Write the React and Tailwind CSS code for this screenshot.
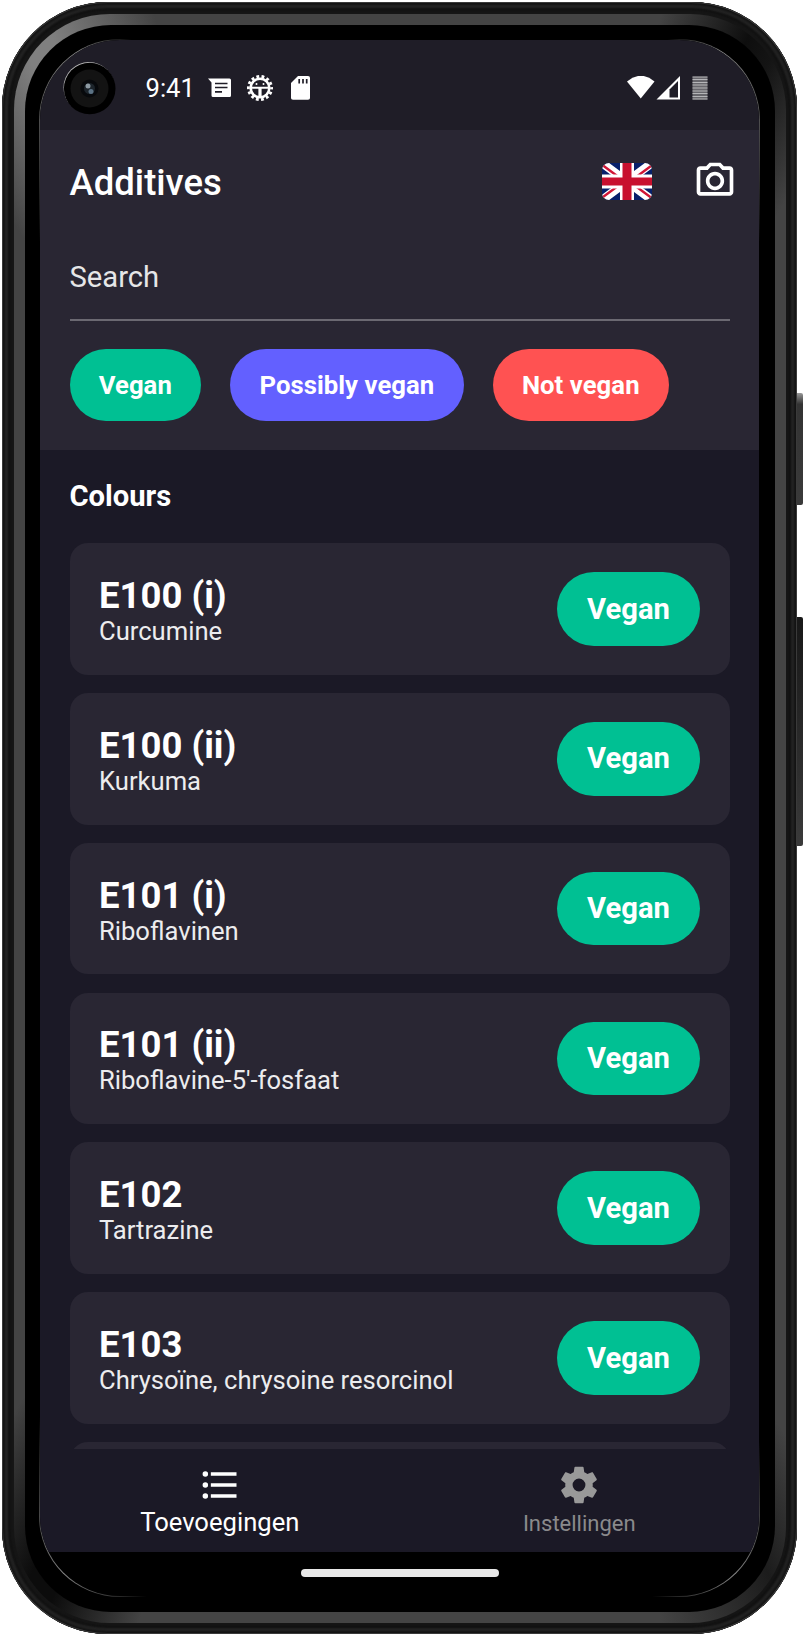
import React, { useState } from "react";

const additives = [
  { code: "E100 (i)", name: "Curcumine", status: "Vegan" },
  { code: "E100 (ii)", name: "Kurkuma", status: "Vegan" },
  { code: "E101 (i)", name: "Riboflavinen", status: "Vegan" },
  { code: "E101 (ii)", name: "Riboflavine-5'-fosfaat", status: "Vegan" },
  { code: "E102", name: "Tartrazine", status: "Vegan" },
  { code: "E103", name: "Chrysoïne, chrysoine resorcinol", status: "Vegan" },
];

const filters = [
  { label: "Vegan", color: "bg-[#00c093]" },
  { label: "Possibly vegan", color: "bg-[#6360ff]" },
  { label: "Not vegan", color: "bg-[#ff5252]" },
];

function FlagIcon() {
  return (
    <svg viewBox="0 0 50 37" className="w-[50px] h-[37px] rounded-[7px]">
      <rect width="50" height="37" fill="#07206b" />
      <path d="M0 0L50 37M50 0L0 37" stroke="#fff" strokeWidth="8.5" />
      <path d="M-1 1L22 18M51 36L28 19M51 1.5L28 18.5M-1 35.5L22 18.5" stroke="#d01636" strokeWidth="2.4" />
      <path d="M25 0V37M0 18.500H50" stroke="#fff" strokeWidth="14" />
      <path d="M25 0V37" stroke="#c8102e" strokeWidth="9" />
      <path d="M0 18.500H50" stroke="#c8102e" strokeWidth="8" />
    </svg>
  );
}

function CameraIcon() {
  return (
    <svg viewBox="0 0 24 24" fill="currentColor" className="size-[44px]">
      <path d="M20 4h-3.17L15 2H9L7.17 4H4c-1.1 0-2 .9-2 2v12c0 1.1.9 2 2 2h16c1.1 0 2-.9 2-2V6c0-1.1-.9-2-2-2zm0 14H4V6h4.05l1.83-2h4.24l1.83 2H20v12zM12 7c-2.76 0-5 2.24-5 5s2.24 5 5 5 5-2.24 5-5-2.24-5-5-5zm0 8c-1.65 0-3-1.35-3-3s1.35-3 3-3 3 1.35 3 3-1.35 3-3 3z" />
    </svg>
  );
}

function ListIcon() {
  return (
    <svg viewBox="0 0 24 24" fill="currentColor" className="size-[44px]">
      <circle cx="4" cy="6" r="1.5" />
      <circle cx="4" cy="12" r="1.5" />
      <circle cx="4" cy="18" r="1.5" />
      <path d="M7 19h14v-2H7v2zm0-6h14v-2H7v2zm0-8v2h14V5H7z" />
    </svg>
  );
}

function SettingsIcon() {
  return (
    <svg viewBox="0 0 24 24" fill="currentColor" className="size-[44px]">
      <path d="M12 15.5A3.5 3.5 0 0 1 8.5 12 3.5 3.5 0 0 1 12 8.5a3.5 3.5 0 0 1 3.5 3.5 3.5 3.5 0 0 1-3.5 3.5m7.430-2.530c.04-.32.07-.64.07-.97s-.03-.66-.07-1l2.110-1.630c.19-.15.24-.42.12-.64l-2-3.460c-.12-.22-.39-.31-.61-.22l-2.490 1c-.52-.39-1.060-.73-1.690-.98l-.37-2.650A.506.506 0 0 0 14 2h-4c-.25 0-.46.18-.5.42l-.37 2.650c-.63.25-1.170.59-1.690.98l-2.490-1c-.22-.09-.49 0-.61.22l-2 3.460c-.13.22-.07.49.12.64L4.570 11c-.04.34-.07.67-.07 1s.03.65.07.97l-2.110 1.660c-.19.15-.25.42-.12.64l2 3.460c.12.22.39.3.61.22l2.490-1.010c.52.4 1.060.74 1.690.99l.37 2.650c.04.24.25.42.5.42h4c.25 0 .46-.18.5-.42l.37-2.650c.63-.26 1.170-.59 1.690-.99l2.490 1.010c.22.08.49 0 .61-.22l2-3.460c.12-.22.07-.49-.12-.64z" />
    </svg>
  );
}

function StatusBar() {
  return (
    <div className="h-[90.5px] shrink-0 bg-[#1f1d27] flex items-start pt-[21px]">
      {/* Camera hole */}
      <svg viewBox="0 0 54 54" className="size-[54px] ml-[22px]">
        <circle cx="27" cy="26.5" r="25.5" fill="#bbb" />
        <circle cx="27.700" cy="27.500" r="25.800" fill="#000" />
        <circle cx="27.500" cy="27.500" r="19" fill="#131313" />
        <circle cx="27.500" cy="27.500" r="9" fill="#07090c" />
        <circle cx="27.500" cy="27.500" r="5.500" fill="#1c242b" />
        <circle cx="26" cy="25" r="2.500" fill="#8d9aa3" />
        <circle cx="29" cy="30.500" r="2.500" fill="#5b7284" />
      </svg>
      <span className="ml-[29.500px] w-[48px] mt-[12px] text-[25.600px] leading-[30px]">9:41</span>
      {/* Message */}
      <svg viewBox="0 0 24 20" className="w-[24px] h-[20px] ml-[14px] mt-[17px]">
        <path d="M0 0.500H21.500Q23 0.500 23 2V17.500Q23 19 21.500 19H5Q3.500 19 3.500 17.500V4.500z" fill="#fff" />
        <path d="M7 5.500H19.500M7 9.500H19.500M7 13.800H14" stroke="#1f1d27" strokeWidth="1.700" />
      </svg>
      {/* Debugging */}
      <svg viewBox="0 0 26 26" className="size-[26px] ml-[15px] mt-[14px]">
        <circle cx="13" cy="13" r="11.600" fill="none" stroke="#fff" strokeWidth="2.800" strokeDasharray="2.800 2.406" strokeDashoffset="1.400" />
        <circle cx="13" cy="13" r="9.300" fill="none" stroke="#fff" strokeWidth="2.600" />
        <path d="M4 12.800H22" stroke="#fff" strokeWidth="2" />
        <path d="M13 13V23" stroke="#fff" strokeWidth="3.200" />
        <circle cx="9.500" cy="9" r="1" fill="#fff" />
        <circle cx="16.500" cy="9" r="1" fill="#fff" />
      </svg>
      {/* SD card */}
      <svg viewBox="0 0 19 24" className="w-[19px] h-[24px] ml-[18.500px] mt-[15px]">
        <path d="M7 0H17Q19 0 19 2V22Q19 23.700 17 23.700H2Q0 23.700 0 22V7z" fill="#fff" />
        <path d="M8.200 3V7.500M12 3V7.500M15.700 3V7.500" stroke="#1f1d27" strokeWidth="1.700" />
      </svg>
      {/* Wifi, signal, battery */}
      <svg viewBox="0 0 82 24" className="w-[82px] h-[24px] ml-auto mr-[50px] mt-[15px]">
        <path d="M0 5.500Q14 -6 27.500 5.500L13.750 22.500z" fill="#fff" />
        <path d="M53 0V23.500H29.500z" fill="#fff" />
        <path d="M51 5V21.500H42.500V13.500z" fill="#1f1d27" />
        <path d="M65.500 0.800H80.500V23.500H65.500z" fill="#68676d" />
        <path d="M65.500 1H80.500M65.500 3.500H80.500M65.500 6.500H80.500M65.500 9H80.500M65.500 12H80.500M65.500 15H80.500M65.500 17.500H80.500M65.500 20.500H80.500M65.500 23H80.500" stroke="#b5b5b8" strokeWidth="1.200" />
      </svg>
    </div>
  );
}

function AdditiveCard({ additive }) {
  return (
    <div className="h-[131.600px] shrink-0 rounded-[18px] bg-[#292633] flex items-center justify-between px-[29.500px]">
      <div className="flex flex-col pt-[4px]">
        <span className="text-[36.500px] leading-[40px] font-bold">{additive.code}</span>
        <span className="text-[25.600px] leading-[30px] text-[#ececee]">{additive.name}</span>
      </div>
      <span className="h-[73.500px] w-[143px] flex items-center justify-center rounded-full bg-[#00c093] text-[29.200px] font-bold pt-[1px]">
        {additive.status}
      </span>
    </div>
  );
}

export default function App() {
  const [search, setSearch] = useState("");

  return (
    <div className="w-[804px] h-[1636px] overflow-hidden bg-white flex items-start pt-[2px] pl-[2px] text-white font-[Roboto,sans-serif]">
      {/* Phone body */}
      <div className="w-[795px] h-[1632px] shrink-0 rounded-[106px] bg-[#161616] p-[11.500px] shadow-[inset_0_0_0_1px_#3a3a3a,inset_0_0_2px_3px_#141414,inset_0_0_2px_6px_#242424,inset_0_0_3px_8px_#101010]">
        <div className="size-full rounded-[96px] p-[11px] bg-[conic-gradient(#444_0deg,#444_18deg,#0e0e0e_24deg,#141414_26deg,#444_32deg,#444_148deg,#1c1c1c_154deg,#444_162deg,#444_198deg,#0c0c0c_204deg,#0c0c0c_206deg,#444_213deg,#444_327deg,#808080_334deg,#808080_336deg,#444_343deg)]">
          <div className="size-full rounded-[86px] bg-black px-[14.500px] pt-[14px] pb-[14.500px]">
            {/* Glass edge glints */}
            <div className="size-full rounded-[81px] p-[1px] bg-[conic-gradient(#000_0deg,#000_19deg,#888_23deg,#444_28deg,#000_32deg,#000_150deg,#888_156deg,#000_162deg,#000_198deg,#888_204deg,#000_211deg,#000_328deg,#444_332deg,#888_337deg,#000_341deg)]">
              <div className="size-full rounded-[80px] overflow-hidden bg-black flex flex-col">
                <StatusBar />

                {/* Header */}
                <header className="h-[320px] shrink-0 bg-[#292633] px-[29.500px] flex flex-col">
                  <div className="h-[102px] flex items-center">
                    <h1 className="text-[36.500px] font-medium pt-[4px]">Additives</h1>
                    <div className="ml-auto flex items-center gap-[40.500px] -mr-[7px]">
                      <FlagIcon />
                      <CameraIcon />
                    </div>
                  </div>
                  <input
                    type="text"
                    placeholder="Search"
                    value={search}
                    onChange={(e) => setSearch(e.target.value)}
                    className="h-[89px] w-full pt-[2px] border-b-[2px] border-[#6b6972] text-[29.200px] outline-none placeholder:text-[#e6e6e8]"
                  />
                  <div className="mt-[28px] flex gap-[29.200px]">
                    {filters.map((filter) => (
                      <button
                        key={filter.label}
                        className={`h-[72px] px-[29.200px] rounded-full text-[25.700px] tracking-[0.05px] font-bold ${filter.color}`}
                      >
                        {filter.label}
                      </button>
                    ))}
                  </div>
                </header>

                {/* Additives list */}
                <main className="h-[999px] shrink-0 overflow-hidden bg-[#1b1926] px-[29.500px] flex flex-col">
                  <h2 className="h-[93.300px] pt-[1px] shrink-0 flex items-center text-[29.200px] font-bold">Colours</h2>
                  <div className="flex flex-col gap-[18.200px]">
                    {additives.map((additive) => (
                      <AdditiveCard key={additive.code} additive={additive} />
                    ))}
                    <div className="h-[131.600px] shrink-0 rounded-[18px] bg-[#292633]" />
                  </div>
                </main>

                {/* Bottom tabs */}
                <nav className="h-[102.500px] shrink-0 bg-[#1b1926] flex">
                  <button className="flex-1 flex flex-col items-center pt-[14px]">
                    <ListIcon />
                    <span className="text-[25.600px] leading-[30px]">Toevoegingen</span>
                  </button>
                  <button className="flex-1 flex flex-col items-center pt-[14px] text-[#999]">
                    <SettingsIcon />
                    <span className="text-[22px] leading-[34px] text-[#8a8a8c]">Instellingen</span>
                  </button>
                </nav>
                <div className="flex-1 flex justify-center pt-[17px]">
                  <div className="w-[198px] h-[8.500px] rounded-full bg-[#e8e8e8]" />
                </div>
              </div>
            </div>
          </div>
        </div>
      </div>

      {/* Side buttons */}
      <div className="flex flex-col pt-[391px] gap-[112px]">
        <div className="w-[5.500px] h-[112px] rounded-r-[2px] bg-linear-to-b from-[#999] from-0% via-[#333] via-10% to-[#3a3a3a]" />
        <div className="w-[5.500px] h-[229px] rounded-r-[2px] bg-linear-to-b from-[#181818] to-[#3a3a3a]" />
      </div>
    </div>
  );
}
